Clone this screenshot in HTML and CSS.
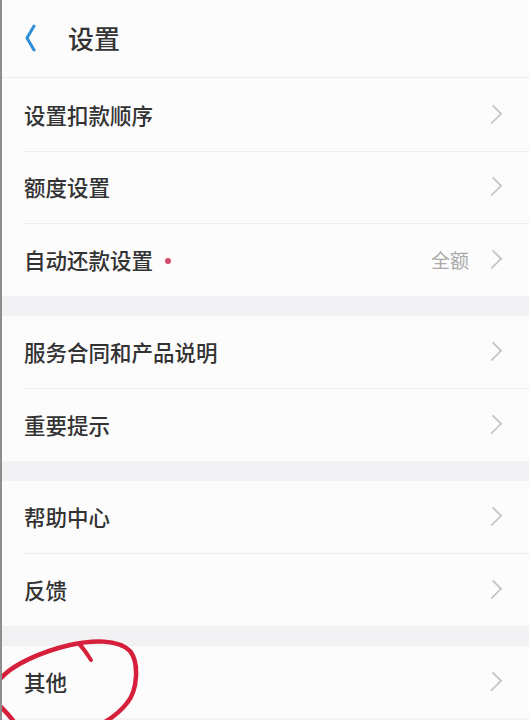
FILE: index.html
```html
<!DOCTYPE html>
<html lang="zh">
<head>
<meta charset="utf-8">
<title>设置</title>
<link rel="stylesheet" href="styles.css">
</head>
<body>
<div class="page">
  <header class="topbar">
    <svg class="back" width="14" height="28" viewBox="0 0 14 28"><path d="M10 2 L3 14 L10 26" fill="none" stroke="#2e8ed6" stroke-width="3" stroke-linecap="round" stroke-linejoin="round"/></svg>
    <h1 class="title">设置</h1>
  </header>

  <section class="group">
    <div class="row"><span class="label">设置扣款顺序</span><span class="chev"></span></div>
    <div class="row"><span class="label">额度设置</span><span class="chev"></span></div>
    <div class="row"><span class="label">自动还款设置</span><span class="dot"></span><span class="value">全额</span><span class="chev"></span></div>
  </section>

  <section class="group">
    <div class="row"><span class="label">服务合同和产品说明</span><span class="chev"></span></div>
    <div class="row"><span class="label">重要提示</span><span class="chev"></span></div>
  </section>

  <section class="group">
    <div class="row"><span class="label">帮助中心</span><span class="chev"></span></div>
    <div class="row"><span class="label">反馈</span><span class="chev"></span></div>
  </section>

  <section class="group">
    <div class="row"><span class="label">其他</span><span class="chev"></span></div>
  </section>

  <svg class="mark" width="150" height="90" viewBox="0 630 150 90">
    <path d="M0 679 C12 665 40 652 70 645 C92 640 118 639 130 651 C139 662 138 690 127 703 C121 711 113 717 105 722" fill="none" stroke="#d61f3a" stroke-width="4.5" stroke-linecap="round"/>
    <path d="M91 660 C87 654 84 649 80 645" fill="none" stroke="#d61f3a" stroke-width="4" stroke-linecap="round"/>
    <path d="M0 706 C5 711 10 716 14 722" fill="none" stroke="#d61f3a" stroke-width="4.5" stroke-linecap="round"/>
  </svg>
</div>
</body>
</html>
```

FILE: styles.css
```css
html, body {
  margin: 0;
  padding: 0;
  background: #f2f1f4;
}

.page {
  position: relative;
  width: 529px;
  height: 720px;
  box-sizing: border-box;
  border-left: 2px solid #8e8e8e;
  background: #f2f1f4;
  font-family: "Noto Sans CJK SC", "Noto Sans", sans-serif;
  color: #333;
  overflow: hidden;
}

.topbar {
  height: 78px;
  box-sizing: border-box;
  background: #fdfcfd;
  border-bottom: 1px solid #eceaee;
  display: flex;
  align-items: center;
  padding-left: 22px;
}

.back {
  display: block;
  margin-top: -2px;
}

.title {
  margin: -2px 0 0 30px;
  font-size: 26px;
  font-weight: 500;
  color: #333;
  line-height: 1;
}

.group {
  background: #fdfcfd;
  margin-bottom: 20px;
}

.row {
  height: 72.5px;
  box-sizing: border-box;
  display: flex;
  align-items: center;
  padding: 0 26px 0 22px;
  position: relative;
}

.row + .row::before {
  content: "";
  position: absolute;
  top: 0;
  left: 22px;
  right: 0;
  height: 1px;
  background: #efedf1;
}

.label {
  font-size: 21.5px;
  color: #333;
  font-weight: 500;
}

.dot {
  width: 6px;
  height: 6px;
  border-radius: 50%;
  background: #d64a6c;
  margin-left: 12px;
  margin-top: 4px;
}

.value {
  margin-left: auto;
  font-size: 19px;
  color: #a9a9a9;
  margin-right: 16px;
}

.chev {
  margin-left: auto;
  width: 15px;
  height: 15px;
  border-top: 2px solid #c6c6c6;
  border-right: 2px solid #c6c6c6;
  transform: rotate(45deg) scaleX(0.85);
  box-sizing: border-box;
  margin-right: 3px;
}

.value + .chev {
  margin-left: 0;
}

.mark {
  position: absolute;
  left: -2px;
  top: 630px;
  pointer-events: none;
}
```
